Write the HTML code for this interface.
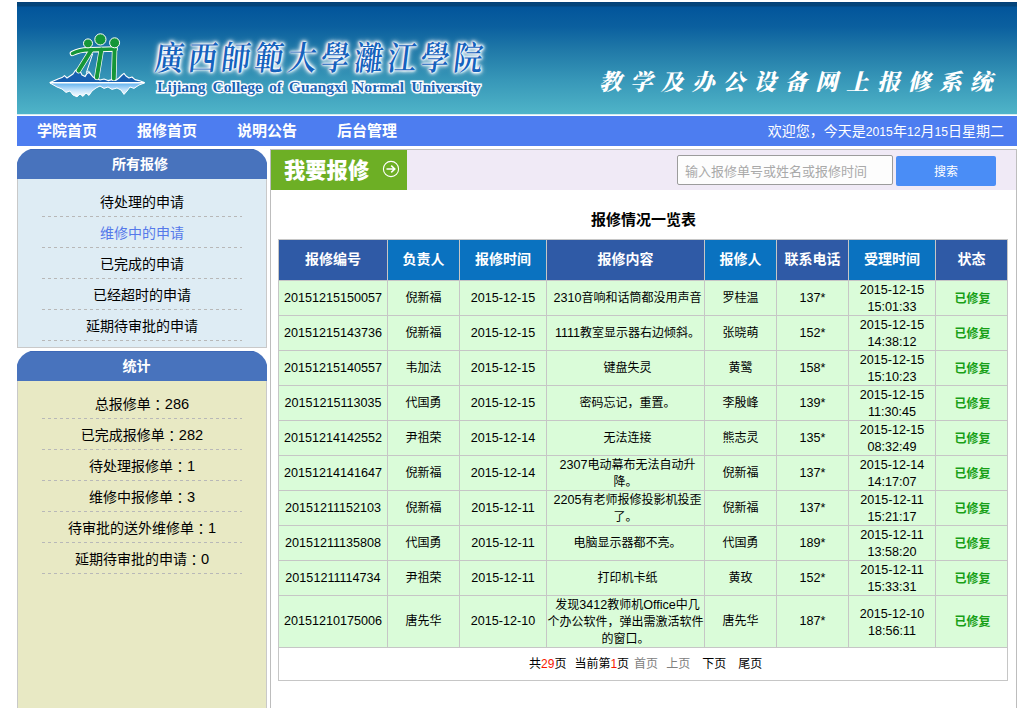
<!DOCTYPE html>
<html lang="zh-CN">
<head>
<meta charset="utf-8">
<title>教学及办公设备网上报修系统</title>
<style>
*{box-sizing:border-box;}
html,body{margin:0;padding:0;background:#fff;}
body{width:1031px;height:708px;overflow:hidden;position:relative;
  font-family:"Liberation Sans","Noto Sans CJK SC",sans-serif;font-size:12px;color:#000;}
a{text-decoration:none;color:inherit;}
ul{list-style:none;margin:0;padding:0;}
#wrap{position:absolute;left:17px;top:0;width:1000px;height:708px;}

/* banner */
#banner{position:absolute;left:0;top:2px;width:1000px;height:112px;overflow:hidden;
  background:linear-gradient(to bottom,#023c78 0,#04447a 1px,#04447a 4px,#02559b 5px,#0b609f 25px,#2079a8 48px,#3797b8 78px,#4fb4c8 112px);}
#logo-ico{position:absolute;left:0;top:0;width:150px;height:113px;}
#logo-cn{position:absolute;left:141px;top:33px;white-space:nowrap;transform-origin:0 0;transform:scale(1,1.16) skewX(-8deg);
  font-family:"Liberation Serif","Noto Serif CJK SC","Noto Serif CJK TC",serif;font-weight:600;font-size:29px;line-height:40px;letter-spacing:4.2px;
  color:#1562bd;text-shadow:0 0 1px #fff,0 0 2px #fff,0 0 2px #fff,0 0 3px #fff,0 0 4px #fff,0 0 5px #fff,0 0 7px #d8ecff;}
#logo-en{position:absolute;left:140px;top:75px;white-space:nowrap;
  font-family:"Liberation Serif",serif;font-weight:bold;font-size:15.6px;line-height:20px;word-spacing:3.1px;letter-spacing:0;
  color:#1a64b4;-webkit-text-stroke:2.8px #fff;paint-order:stroke fill;text-shadow:0 0 2px #fff,0 0 3px #eaf5ff;}
#sys-title{position:absolute;left:582px;top:66px;white-space:nowrap;
  font-family:"Liberation Serif","Noto Serif CJK SC",serif;font-weight:900;font-style:italic;font-size:22.5px;line-height:30px;letter-spacing:8.4px;color:#fff;}

/* nav */
#bline{position:absolute;left:0;top:114px;width:1000px;height:1px;background:#d3ecf1;}
#nav{position:absolute;left:0;top:116px;width:1000px;height:30px;background:#4d7df0;color:#fff;}
#nav ul li{float:left;width:100px;height:30px;line-height:29px;text-align:center;font-size:15px;font-weight:bold;}
#nav .welcome i{font-style:normal;font-size:12.2px;}
#nav .welcome{position:absolute;right:13px;top:0;line-height:30px;font-size:14px;white-space:nowrap;}

/* sidebar */
#side{position:absolute;left:0;top:149px;width:250px;height:559px;}
.sb-h{height:30px;line-height:31px;background:linear-gradient(to bottom,#3d68b7 0,#3d68b7 1px,#4873bd 1px);color:#fff;font-size:14px;font-weight:bold;text-align:center;padding-right:4px;border-radius:14px 14px 0 0;
  clip-path:path("M0 13.2 A21.3 21.3 0 0 1 13.2 0 L236.8 0 A21.3 21.3 0 0 1 250 13.2 L250 30 L0 30 Z");}
.sb-1{height:169px;background:#deecf4;border:1px solid #c9c9c9;border-top:0;}
.sb-2{height:400px;background:#e8e9c4;border:1px solid #c9c9c9;border-top:0;}
.sb-1 ul,.sb-2 ul{padding-top:7px;}
.sb-1 li,.sb-2 li{width:200px;margin:0 auto;height:31px;line-height:34px;text-align:center;font-size:14px;background:repeating-linear-gradient(to right,#b8b8b8 0,#b8b8b8 3px,transparent 3px,transparent 6px) left bottom/100% 1px no-repeat;}
.sb-gap{height:3px;}
.sb-1 li{line-height:33px;}
.sb-2 li{line-height:30px;}
.sb-2 li i{font-style:normal;font-size:14.6px;}
.c{font-family:"Noto Sans CJK JP",sans-serif;position:relative;top:1px;}

/* main */
#main{position:absolute;left:253px;top:149px;width:747px;height:559px;border:1px solid #bdbdbd;border-bottom:0;background:#fff;}
#tool{position:absolute;left:0;top:0;width:745px;height:40px;background:#f0eaf6;}
#btn-new{position:absolute;left:0;top:0;width:136px;height:40px;background:#6daf25;color:#fff;font-size:21.3px;font-weight:900;line-height:42px;padding-left:13px;}
#btn-new svg{position:absolute;left:110px;top:9px;}
#q{position:absolute;left:406px;top:5px;width:216px;height:30px;border:1px solid #9c9c9c;border-radius:2px;background:#fdfdfd;color:#a9a9a9;font-size:13px;line-height:31px;padding-left:7px;}
#go{position:absolute;left:625px;top:6px;width:100px;height:30px;background:#4a8df6;border-radius:2px;color:#fff;font-size:12px;line-height:33px;text-align:center;}
#ttl{position:absolute;left:0;top:58px;width:745px;text-align:center;font-size:15px;font-weight:bold;line-height:24px;}
table{position:absolute;left:7px;top:89px;width:729px;border-collapse:collapse;table-layout:fixed;}
th,td{border:1px solid #c6c6c6;padding:0;text-align:center;vertical-align:middle;}
th{height:41px;color:#fff;font-size:14px;font-weight:bold;background:#0a72c0;line-height:20px;padding-bottom:2px;}
th.d{background:#2f5aa6;}
td{height:35px;background:#dafcd9;font-size:12px;line-height:17px;}
td.ok{color:#17a017;font-weight:bold;font-size:12px;padding-top:2px;padding-left:2px;}
td div{position:relative;top:1px;}
td.ct{white-space:nowrap;}
.sp{display:inline-block;width:4px;height:1px;}
td.pg{height:33px;background:#fff;text-align:left;padding-left:250px;white-space:nowrap;}
td.pg span{display:inline-block;}
td.pg b{font-weight:normal;color:#f81500;}
.p2{margin-left:8px;}.p3{margin-left:5px;color:#808080;}.p4{margin-left:8px;color:#808080;}.p5{margin-left:12px;}.p6{margin-left:12px;}
.n{font-size:12.6px;}
</style>
</head>
<body>
<div id="wrap">
  <div id="banner">
    <svg id="logo-ico" viewBox="17 2 150 113" width="150" height="113">
      <defs>
        <linearGradient id="refl" x1="0" y1="0" x2="0" y2="1"><stop offset="0" stop-color="#5fb0ee"/><stop offset="0.45" stop-color="#b9defa"/><stop offset="1" stop-color="#ffffff"/></linearGradient>
      </defs>
      <path d="M50 82.6 L58 79 L62 77.6 L64.5 75.6 L67 78 L70 76 L73 74 L75 71 L77.5 68.6 L80 71 L82 75 L85 76.6 L87 73.4 L89 72.4 L91 74.6 L93 77 L96 78.6 L100 80 L104 79 L108 80.6 L112 79.6 L116 80.2 L119 78 L122 75 L124 73.4 L126 76 L129 78 L132 77 L135 79.6 L139 80.6 L144.4 82.6 Z" fill="#1860b0" stroke="#fff" stroke-width="1.1" stroke-linejoin="round"/>
      <path d="M50 83 L144.4 83 L139 85 L134 88.4 L130 87 L127 91 L124 94.4 L121 90 L117 88 L112 89.4 L108 87 L104 88.4 L100 86 L96 88 L92 91 L89 95.4 L86 93 L83 96.4 L80 94 L77 96.8 L73 95 L70 91 L66 92.4 L62 89 L57 87 Z" fill="url(#refl)" stroke="#fff" stroke-width="1" stroke-linejoin="round"/>
      <g fill="none" stroke-linecap="round" stroke-linejoin="round">
        <path d="M72.4 53.4 Q81 49 91.6 49.8 L78.6 70.6 M90 49.8 L115.2 49 M101.4 49.4 L96.8 77.4 M114.6 49.4 L113.8 78.4" stroke="#fff" stroke-width="5.4"/>
        <path d="M91.6 49.8 L78.6 70.6 M101.4 49.4 L96.8 77.4 M114.6 49.4 L113.8 78.4" stroke="#159638" stroke-width="4"/>
        <path d="M72.4 53.4 Q81 49 91.6 49.8 L115.2 49" stroke="#159638" stroke-width="3.4"/>
        <path d="M92.6 54 L86.4 72.6 L88.6 71 L91 74" stroke="#fff" stroke-width="1"/>
      </g>
      <g fill="#159638" stroke="#fff" stroke-width="1">
        <circle cx="88" cy="43.4" r="4.5"/>
        <circle cx="100.4" cy="39.4" r="5.6"/>
        <circle cx="114.6" cy="42.8" r="5"/>
      </g>
    </svg>
    <div id="logo-cn">廣西師範大學灕江學院</div>
    <div id="logo-en">Lijiang College of Guangxi Normal University</div>
    <div id="sys-title">教学及办公设备网上报修系统</div>
  </div>
  <div id="bline"></div>
  <div id="nav">
    <ul><li>学院首页</li><li>报修首页</li><li>说明公告</li><li>后台管理</li></ul>
    <div class="welcome">欢迎您，今天是<i>2015</i>年<i>12</i>月<i>15</i>日星期二</div>
  </div>
  <div id="side">
    <div class="sb-h">所有报修</div>
    <div class="sb-1"><ul>
      <li>待处理的申请</li><li style="color:#5579ea">维修中的申请</li><li>已完成的申请</li><li>已经超时的申请</li><li>延期待审批的申请</li>
    </ul></div>
    <div class="sb-gap"></div>
    <div class="sb-h" style="padding-right:11px">统计</div>
    <div class="sb-2"><ul>
      <li>总报修单<span class="c" lang="ja">：</span><i>286</i></li><li>已完成报修单<span class="c" lang="ja">：</span><i>282</i></li><li>待处理报修单<span class="c" lang="ja">：</span><i>1</i></li><li>维修中报修单<span class="c" lang="ja">：</span><i>3</i></li><li>待审批的送外维修单<span class="c" lang="ja">：</span><i>1</i></li><li>延期待审批的申请<span class="c" lang="ja">：</span><i>0</i></li>
    </ul></div>
  </div>
  <div id="main">
    <div id="tool">
      <div id="btn-new">我要报修<svg width="20" height="20" viewBox="0 0 20 20"><circle cx="10" cy="10" r="7.6" fill="none" stroke="#fff" stroke-width="1.1"/><path d="M5.5 10H13.6M10.2 6.6L13.8 10L10.2 13.4" fill="none" stroke="#fff" stroke-width="1.5"/></svg></div>
      <div id="q">输入报修单号或姓名或报修时间</div>
      <div id="go">搜索</div>
    </div>
    <div id="ttl">报修情况一览表</div>
    <table>
      <colgroup><col style="width:109px"><col style="width:72px"><col style="width:87px"><col style="width:158px"><col style="width:72px"><col style="width:72px"><col style="width:87px"><col style="width:72px"></colgroup>
      <tr><th class="d">报修编号</th><th>负责人</th><th>报修时间</th><th class="d">报修内容</th><th>报修人</th><th class="d">联系电话</th><th>受理时间</th><th class="d">状态</th></tr>
      <tr><td class="n">20151215150057</td><td>倪新福</td><td class="n">2015-12-15</td><td class="ct"><i class="sp"></i><span class="n">2310</span>音响和话筒都没用声音</td><td>罗桂温</td><td class="n">137*</td><td class="n"><div>2015-12-15<br>15:01:33</div></td><td class="ok">已修复</td></tr>
      <tr><td class="n">20151215143736</td><td>倪新福</td><td class="n">2015-12-15</td><td class="ct"><i class="sp"></i><span class="n">1111</span>教室显示器右边倾斜。</td><td>张晓萌</td><td class="n">152*</td><td class="n"><div>2015-12-15<br>14:38:12</div></td><td class="ok">已修复</td></tr>
      <tr><td class="n">20151215140557</td><td>韦加法</td><td class="n">2015-12-15</td><td class="ct"><i class="sp"></i>键盘失灵</td><td>黄鹭</td><td class="n">158*</td><td class="n"><div>2015-12-15<br>15:10:23</div></td><td class="ok">已修复</td></tr>
      <tr><td class="n">20151215113035</td><td>代国勇</td><td class="n">2015-12-15</td><td class="ct"><i class="sp"></i>密码忘记，重置。</td><td>李殷峰</td><td class="n">139*</td><td class="n"><div>2015-12-15<br>11:30:45</div></td><td class="ok">已修复</td></tr>
      <tr><td class="n">20151214142552</td><td>尹祖荣</td><td class="n">2015-12-14</td><td class="ct"><i class="sp"></i>无法连接</td><td>熊志灵</td><td class="n">135*</td><td class="n"><div>2015-12-15<br>08:32:49</div></td><td class="ok">已修复</td></tr>
      <tr><td class="n">20151214141647</td><td>倪新福</td><td class="n">2015-12-14</td><td class="ct"><div><i class="sp"></i><span class="n">2307</span>电动幕布无法自动升<br>降。</div></td><td>倪新福</td><td class="n">137*</td><td class="n"><div>2015-12-14<br>14:17:07</div></td><td class="ok">已修复</td></tr>
      <tr><td class="n">20151211152103</td><td>倪新福</td><td class="n">2015-12-11</td><td class="ct"><div><i class="sp"></i><span class="n">2205</span>有老师报修投影机投歪<br>了。</div></td><td>倪新福</td><td class="n">137*</td><td class="n"><div>2015-12-11<br>15:21:17</div></td><td class="ok">已修复</td></tr>
      <tr><td class="n">20151211135808</td><td>代国勇</td><td class="n">2015-12-11</td><td class="ct"><i class="sp"></i>电脑显示器都不亮。</td><td>代国勇</td><td class="n">189*</td><td class="n"><div>2015-12-11<br>13:58:20</div></td><td class="ok">已修复</td></tr>
      <tr><td class="n">20151211114734</td><td>尹祖荣</td><td class="n">2015-12-11</td><td class="ct"><i class="sp"></i>打印机卡纸</td><td>黄玫</td><td class="n">152*</td><td class="n"><div>2015-12-11<br>15:33:31</div></td><td class="ok">已修复</td></tr>
      <tr><td class="n" style="height:52px">20151210175006</td><td>唐先华</td><td class="n">2015-12-10</td><td class="ct"><div><i class="sp"></i>发现<span class="n">3412</span>教师机<span class="n">Office</span>中几<br>个办公软件，弹出需激活软件<br>的窗口。</div></td><td>唐先华</td><td class="n">187*</td><td class="n"><div>2015-12-10<br>18:56:11</div></td><td class="ok">已修复</td></tr>
      <tr><td colspan="8" class="pg"><span class="p1">共<b>29</b>页</span><span class="p2">当前第<b>1</b>页</span><span class="p3">首页</span><span class="p4">上页</span><span class="p5">下页</span><span class="p6">尾页</span></td></tr>
    </table>
  </div>
</div>
</body>
</html>
